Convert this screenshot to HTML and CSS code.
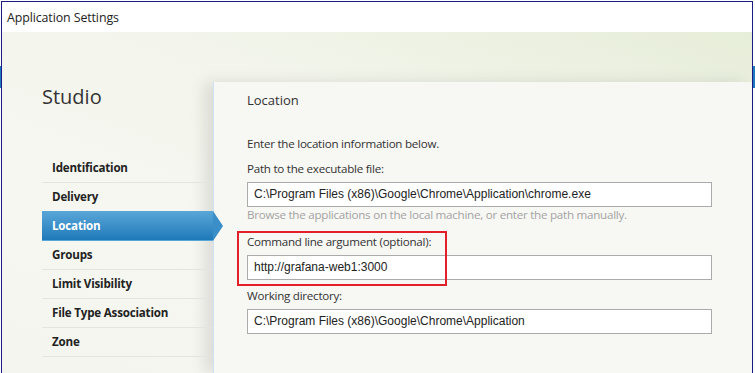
FILE: index.html
```html
<!DOCTYPE html>
<html>
  <head>
    <meta charset="utf-8">
    <title>Application Settings</title>
    <link rel="stylesheet" href="styles.css">
  </head>
  <body>
    <div class="window">
      <div class="titlebar">Application Settings</div>
      <div class="main">
        <div class="aside">
          <h1 class="studio">Studio</h1>
          <div class="nav">
            <div class="item">Identification</div>
            <div class="item">Delivery</div>
            <div class="item active">Location</div>
            <div class="item">Groups</div>
            <div class="item">Limit Visibility</div>
            <div class="item">File Type Association</div>
            <div class="item">Zone</div>
          </div>
        </div>
        <div class="panel">
          <h2 class="heading">Location</h2>
          <p class="intro">Enter the location information below.</p>
          <div class="field">
            <label class="label">Path to the executable file:</label>
            <div class="input">C:\Program Files (x86)\Google\Chrome\Application\chrome.exe</div>
            <p class="hint">Browse the applications on the local machine, or enter the path manually.</p>
          </div>
          <div class="field marked">
            <label class="label">Command line argument (optional):</label>
            <div class="input">http://grafana-web1:3000</div>
            <span class="highlight"></span>
          </div>
          <div class="field">
            <label class="label">Working directory:</label>
            <div class="input">C:\Program Files (x86)\Google\Chrome\Application</div>
          </div>
        </div>
      </div>
    </div>
  </body>
</html>
```

FILE: styles.css
```css
* {
  margin: 0;
  box-sizing: border-box;
}

html,
body {
  width: 755px;
  height: 373px;
  overflow: hidden;
}

body {
  background: linear-gradient(to bottom, #fcfcfc 66px, #1d7cc0 66px, #1d7cc0 88px, #fcfcfc 88px);
  font-family: "Open Sans", "Noto Sans", sans-serif;
  color: #2b2b2b;
}

.window {
  margin: 1px 0 0 1px;
  width: 752px;
  height: 372px;
  border: 1px solid #1c1c86;
  border-bottom: none;
  display: flex;
  flex-direction: column;
  background: #fff;
}

.titlebar {
  height: 30px;
  padding: 9px 0 0 5px;
  font-size: 12.4px;
  line-height: 14px;
  letter-spacing: -0.1px;
  color: #222;
  background: #fff;
}

.main {
  flex: 1;
  display: grid;
  grid-template-columns: 211px 1fr;
  background: linear-gradient(200deg, #e6edd8 0%, #f3f5ec 35%, #f6f7f1 70%, #f4f5ee 100%);
}

.aside {
  padding: 53px 0 0 40px;
}

.studio {
  font-size: 20px;
  font-weight: normal;
  line-height: 24px;
  color: #333;
  margin-bottom: 45px;
}

.nav .item {
  position: relative;
  height: 29px;
  line-height: 28px;
  padding-left: 10px;
  font-size: 11.6px;
  font-weight: bold;
  letter-spacing: -0.2px;
  color: #222;
  border-bottom: 1px solid #e4e4e0;
}

.nav .item.active {
  color: #fff;
  background: linear-gradient(to bottom, #5aa6d8, #1f7ab9);
  border-bottom-color: transparent;
  margin-top: -1px;
  height: 30px;
  line-height: 29px;
}

.nav .item.active::after {
  content: "";
  position: absolute;
  top: 0;
  right: -10px;
  border-left: 10px solid #3b8fc9;
  border-top: 15px solid transparent;
  border-bottom: 15px solid transparent;
}

.panel {
  margin-top: 50px;
  padding: 9px 40px 0 33px;
  background: #f7f7f3;
  border-left: 1px solid #cfe0f2;
  box-shadow: -9px 0 14px rgba(0, 0, 0, 0.1);
}

.heading {
  font-size: 13px;
  font-weight: normal;
  line-height: 18px;
  color: #333;
  margin-bottom: 27px;
}

.intro,
.label,
.hint {
  display: block;
  font-size: 11.6px;
  line-height: 16px;
  letter-spacing: -0.25px;
  color: #333;
}

.intro {
  margin-bottom: 9px;
}

.field {
  position: relative;
  margin-bottom: 8px;
}

.field .label {
  margin-bottom: 5px;
}

.input {
  height: 25px;
  width: 465px;
  padding: 0 6px;
  line-height: 23px;
  border: 1px solid #ababab;
  background: #fff;
  font-family: "Liberation Sans", Arial, sans-serif;
  font-size: 12px;
  color: #222;
}

.hint {
  color: #a3a3a3;
}

.marked {
  margin-top: 11px;
}

.highlight {
  position: absolute;
  left: -10px;
  top: -3px;
  width: 210px;
  height: 55px;
  border: 2px solid #e3202a;
}
```
